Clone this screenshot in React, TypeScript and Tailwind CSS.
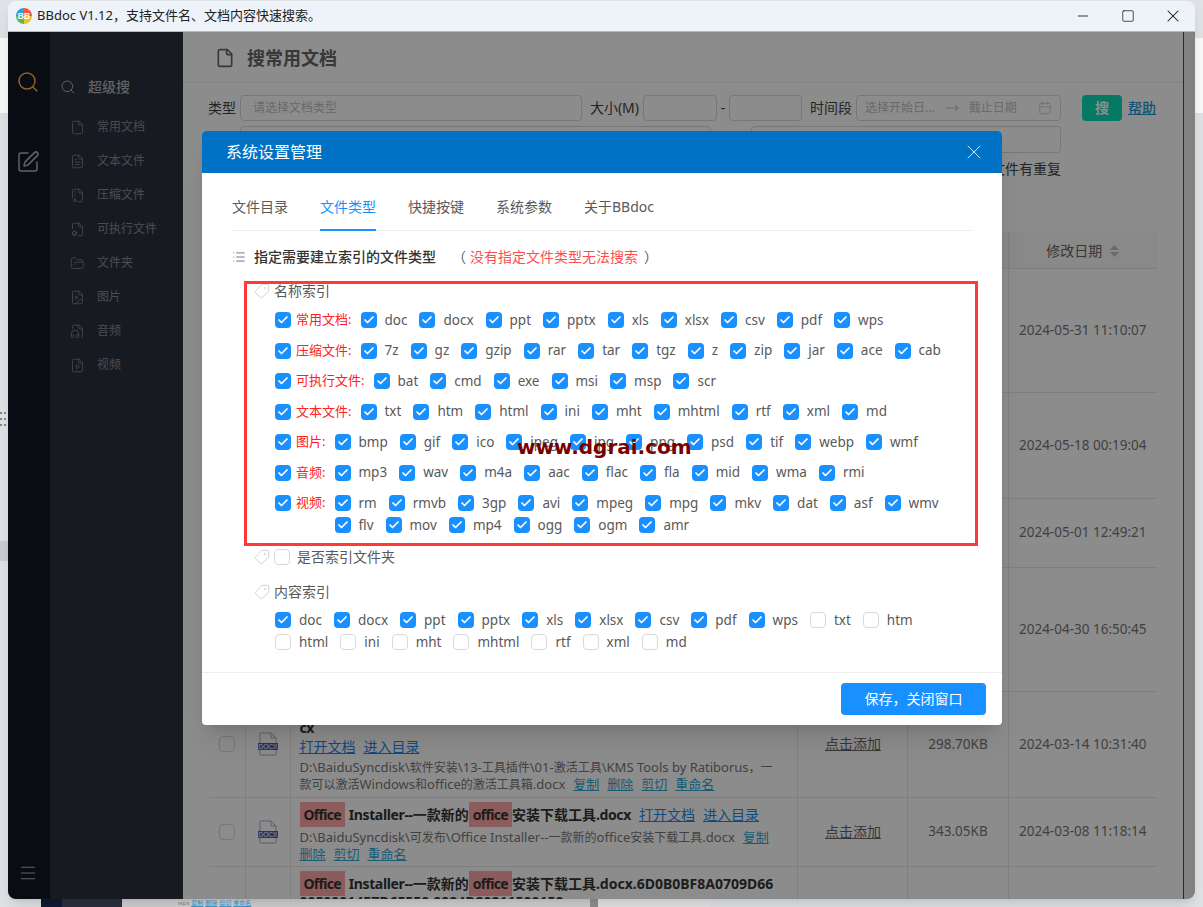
import { Calendar, Check, File, FileArchive, FileAudio, FileCog, FileImage, FileText, FileVideo, FolderOpen, List, Menu, Minus, MoveRight, Search, Square, SquarePen, Tag, X } from "lucide-react";

const sideItems = [
  { icon: File, label: "常用文档" },
  { icon: FileText, label: "文本文件" },
  { icon: FileArchive, label: "压缩文件" },
  { icon: FileCog, label: "可执行文件" },
  { icon: FolderOpen, label: "文件夹" },
  { icon: FileImage, label: "图片" },
  { icon: FileAudio, label: "音频" },
  { icon: FileVideo, label: "视频" },
];

const nameRows = [
  { label: "常用文档", items: ["doc", "docx", "ppt", "pptx", "xls", "xlsx", "csv", "pdf", "wps"] },
  { label: "压缩文件", items: ["7z", "gz", "gzip", "rar", "tar", "tgz", "z", "zip", "jar", "ace", "cab"] },
  { label: "可执行文件", items: ["bat", "cmd", "exe", "msi", "msp", "scr"] },
  { label: "文本文件", items: ["txt", "htm", "html", "ini", "mht", "mhtml", "rtf", "xml", "md"] },
  { label: "图片", items: ["bmp", "gif", "ico", "jpeg", "jpg", "png", "psd", "tif", "webp", "wmf"] },
  { label: "音频", items: ["mp3", "wav", "m4a", "aac", "flac", "fla", "mid", "wma", "rmi"] },
  { label: "视频", items: ["rm", "rmvb", "3gp", "avi", "mpeg", "mpg", "mkv", "dat", "asf", "wmv", "flv", "mov", "mp4", "ogg", "ogm", "amr"] },
];

const contentChecked = ["doc", "docx", "ppt", "pptx", "xls", "xlsx", "csv", "pdf", "wps"];
const contentOff = ["txt", "htm", "html", "ini", "mht", "mhtml", "rtf", "xml", "md"];

function Box({ on = true }: { on?: boolean }) {
  if (!on) return <span className="size-4 shrink-0 rounded-sm border border-[#d9d9d9] bg-white" />;
  return (
    <span className="flex size-4 shrink-0 items-center justify-center rounded-sm bg-[#1890ff]">
      <Check size={12} strokeWidth={3.5} className="text-white" />
    </span>
  );
}

function Item({ text, on = true }: { text: string; on?: boolean }) {
  return (
    <span className="flex h-[22px] items-center gap-2 text-[13.5px] text-[#595959]">
      <Box on={on} />
      {text}
    </span>
  );
}

function SectionHead({ text }: { text: string }) {
  return (
    <div className="flex h-5 items-center gap-1 pl-5.5 text-sm text-[#595959]">
      <Tag size={16} strokeWidth={1} className="-scale-x-100 text-[#bbbbbb]" />
      {text}
    </div>
  );
}

function DocIcon() {
  return (
    <svg width="20" height="24" viewBox="0 0 20 24" className="mx-auto">
      <path d="M3 1h10l5 5v16a1 1 0 0 1-1 1H3a1 1 0 0 1-1-1V2a1 1 0 0 1 1-1z" fill="#fff" stroke="#a3a9cc" />
      <path d="M13 1v5h5" fill="none" stroke="#a3a9cc" />
      <rect x="0" y="11" width="20" height="7" fill="#5560b0" />
      <text x="10" y="17" textAnchor="middle" fontSize="6.5" fill="#fff" fontFamily="Liberation Sans">DOCX</text>
    </svg>
  );
}

function L({ children }: { children: string }) {
  return <span className="tracking-tight">{children}</span>;
}

// chinese runs in the path lines are a size smaller than the latin ones
function C({ children }: { children: string }) {
  return <span className="text-xs">{children}</span>;
}

function Hl({ children }: { children: string }) {
  return <span className="inline-block h-[25px] bg-[#ffa8a8] px-1 tracking-tighter">{children}</span>;
}

function Links({ items, big = false }: { items: string[]; big?: boolean }) {
  return (
    <>
      {items.map((t) => (
        <a key={t} className={big ? "ml-2 text-sm font-normal text-[#1e88e5] underline first:ml-0" : "ml-2 text-[13px] text-[#2fa8d5] underline first:ml-0"}>
          {t}
        </a>
      ))}
    </>
  );
}

function Row({ h, date, size, doc, children }: { h: string; date: string; size?: string; doc?: boolean; children?: React.ReactNode }) {
  return (
    <tr className={`${h} border-b border-[#e8e8e8]`}>
      <td className="border-r border-[#e8e8e8] text-center align-middle">
        {doc && <span className="mx-auto block size-4 rounded-sm border border-[#d9d9d9] bg-white" />}
      </td>
      <td className="border-r border-[#e8e8e8] align-middle">{doc && <DocIcon />}</td>
      <td className="overflow-hidden border-r border-[#e8e8e8] pl-2.25 pr-3 align-top">{children}</td>
      <td className="border-r border-[#e8e8e8] text-center align-middle text-sm text-[#666] underline">{doc && "点击添加"}</td>
      <td className="border-r border-[#e8e8e8] text-center align-middle text-[13.5px] text-[#777]">{size}</td>
      <td className="text-center align-middle text-[13.5px] text-[#777]">{date}</td>
    </tr>
  );
}

function Input({ className, text }: { className: string; text?: string }) {
  return (
    <div className={`flex h-[26px] items-center rounded-sm border border-[#d9d9d9] bg-white px-3 text-xs text-[#bfbfbf] ${className}`}>{text}</div>
  );
}

function Main() {
  return (
    <div className="flex min-w-0 flex-1 flex-col bg-white">
      <div className="flex h-[51px] shrink-0 items-center gap-3 border-b border-[#eeeeee] pl-8 pt-0.5 text-lg font-bold text-[#666]">
        <File size={20} strokeWidth={2} />
        搜常用文档
      </div>
      <div className="flex pl-6.25 pt-3">
        <div className="w-[853px] text-sm text-[#444]">
          <div className="flex items-center">
            <span className="w-8">类型</span>
            <Input className="flex-1" text="请选择文档类型" />
            <span className="ml-2 mr-1">大小(M)</span>
            <Input className="w-[74px]" />
            <span className="w-3 text-center">-</span>
            <Input className="w-[73px]" />
            <span className="ml-2 mr-1">时间段</span>
            <div className="flex h-[26px] w-[205px] items-center rounded-sm border border-[#d9d9d9] bg-white px-2 text-xs text-[#bfbfbf]">
              选择开始日...
              <MoveRight size={14} className="mx-2.5" />
              截止日期
              <Calendar size={14} strokeWidth={1.25} className="ml-auto" />
            </div>
          </div>
          <div className="mt-1.25 flex">
            <Input className="ml-8 w-[471px]" />
            <Input className="ml-10 h-[27px] flex-1" />
          </div>
          <div className="mt-1.5 text-right">未显示文件有重复</div>
        </div>
        <div className="ml-[21px] flex h-[26px] items-center gap-1.5">
          <span className="flex h-[26px] w-10 items-center justify-center rounded-sm bg-[#0bdcb8] text-sm font-bold text-white">搜</span>
          <a className="text-sm font-medium text-[#1a9ad6] underline">帮助</a>
        </div>
      </div>
      <div className="mt-[53px] pl-6.5 pr-6.5">
        <table className="w-full table-fixed border-collapse">
          <colgroup>
            <col className="w-9" />
            <col className="w-[45px]" />
            <col />
            <col className="w-[110px]" />
            <col className="w-[100px]" />
            <col className="w-[149px]" />
          </colgroup>
          <thead>
            <tr className="h-9 border-b border-[#e8e8e8] bg-[#fafafa]">
              <th colSpan={5} className="border-r border-[#e8e8e8]" />
              <th className="font-normal text-[#666]">
                <span className="flex items-center justify-center gap-2 pt-0.5 text-sm">
                  修改日期
                  <svg width="9" height="12" viewBox="0 0 9 12" fill="#bfbfbf">
                    <path d="M4.5 0L9 5H0z" />
                    <path d="M4.5 12L0 7h9z" />
                  </svg>
                </span>
              </th>
            </tr>
          </thead>
          <tbody>
            <Row h="h-[124px]" date="2024-05-31 11:10:07" />
            <Row h="h-[106px]" date="2024-05-18 00:19:04" />
            <Row h="h-[69px]" date="2024-05-01 12:49:21" />
            <Row h="h-[124px]" date="2024-04-30 16:50:45" />
            <Row h="h-[106px]" date="2024-03-14 10:31:40" size="298.70KB" doc>
              <div className="pt-1.5 text-sm font-bold leading-5 text-[#333]">
                <L>KMS Tools by Ratiborus</L>，一款可以激活的工具箱.do
                <br />
                <L>cx</L>
              </div>
              <div className="-mt-0.5 leading-5">
                <Links big items={["打开文档", "进入目录"]} />
              </div>
              <div className="mt-0.5 whitespace-nowrap text-[13px] leading-4 text-[#777]">
                D:\BaiduSyncdisk\<C>软件安装</C>\13-<C>工具插件</C>\01-<C>激活工具</C>\KMS Tools by Ratiborus<C>，一</C>
                <br />
                <C>款可以激活</C>Windows<C>和</C>office<C>的激活工具箱</C>.docx
                <span className="ml-2"><Links items={["复制", "删除", "剪切", "重命名"]} /></span>
              </div>
            </Row>
            <Row h="h-[69px]" date="2024-03-08 11:18:14" size="343.05KB" doc>
              <div className="mt-1 whitespace-nowrap text-sm font-bold leading-[25px] text-[#333]">
                <Hl>Office</Hl> <L>Installer--</L>一款新的<Hl>office</Hl>安装下载工具<L>.docx</L>
                <span className="ml-2"><Links big items={["打开文档", "进入目录"]} /></span>
              </div>
              <div className="mt-0.5 whitespace-nowrap text-[13px] leading-4 text-[#777]">
                D:\BaiduSyncdisk\<C>可发布</C>\Office Installer--<C>一款新的</C>office<C>安装下载工具</C>.docx
                <span className="ml-2"><Links items={["复制"]} /></span>
                <br />
                <span><Links items={["删除", "剪切", "重命名"]} /></span>
              </div>
            </Row>
            <Row h="h-[69px]" date="" doc={false}>
              <div className="mt-1 whitespace-nowrap text-sm font-bold leading-[25px] text-[#333]">
                <Hl>Office</Hl> <L>Installer--</L>一款新的<Hl>office</Hl>安装下载工具.docx.6D0B0BF8A0709D66
                <div className="-mt-1 leading-5">00F0001457D6F550.0024D20211500159</div>
              </div>
            </Row>
          </tbody>
        </table>
      </div>
    </div>
  );
}

function Modal() {
  return (
    <div className="absolute left-[194px] top-[99px] flex h-[594px] w-[800px] flex-col overflow-hidden rounded-sm bg-white shadow-xl">
      <div className="flex h-[42px] shrink-0 items-center justify-between bg-[#0072c6] pl-6 pr-4 text-base text-white">
        系统设置管理
        <X size={24} strokeWidth={1} className="text-[#cfe4f7]" />
      </div>
      <div className="flex-1 px-7.5">
        <div className="flex gap-8 border-b border-[#eeeeee] pt-6 text-sm text-[#595959]">
          <span className="pb-3">文件目录</span>
          <span className="-mb-px border-b-2 border-[#1890ff] pb-3 text-[#1890ff]">文件类型</span>
          <span className="pb-3">快捷按键</span>
          <span className="pb-3">系统参数</span>
          <span className="pb-3">关于BBdoc</span>
        </div>
        <div className="mt-4 flex h-5 items-center text-sm">
          <List size={14} strokeWidth={1.5} className="mr-2 text-[#666]" />
          <span className="font-medium text-[#333]">指定需要建立索引的文件类型</span>
          <span className="ml-4 text-[#595959]">（</span>
          <span className="ml-1 text-[#ff4d4f]">没有指定文件类型无法搜索</span>
          <span className="ml-1.5 text-[#595959]">）</span>
        </div>
        <div className="mt-3.5">
          <SectionHead text="名称索引" />
        </div>
        <div className="mt-2 flex flex-col gap-[8.5px] pl-[43px]">
          {nameRows.map((r) => (
            <div key={r.label} className="flex items-start">
              <span className="flex h-[22px] items-center">
                <Box />
                <span className="ml-[5px] mr-2.25 whitespace-nowrap text-[13px] text-[#ff2020]">{r.label}:</span>
              </span>
              <div className="flex flex-1 flex-wrap gap-x-3">
                {r.items.map((t) => (
                  <Item key={t} text={t} />
                ))}
              </div>
            </div>
          ))}
        </div>
        <div className="mt-2.5 flex h-[22px] items-center pl-5.5 text-sm text-[#595959]">
          <Tag size={16} strokeWidth={1} className="mr-1 -scale-x-100 text-[#bbbbbb]" />
          <Box on={false} />
          <span className="ml-1.75">是否索引文件夹</span>
        </div>
        <div className="mt-3.5">
          <SectionHead text="内容索引" />
        </div>
        <div className="mt-[7px] flex flex-wrap gap-x-3 pl-[43px] pr-4">
          {contentChecked.map((t) => (
            <Item key={t} text={t} />
          ))}
          {contentOff.map((t) => (
            <Item key={t} text={t} on={false} />
          ))}
        </div>
      </div>
      <div className="flex h-[53px] shrink-0 justify-end border-t border-[#eeeeee] pr-4 pt-2.5">
        <button className="h-8 w-[145px] rounded-sm bg-[#1890ff] text-sm text-white">保存，关闭窗口</button>
      </div>
      <div className="absolute left-[42px] top-[150px] h-[265px] w-[734px] border-[3px] border-[#ff3838]" />
      <div className="absolute left-[315px] top-[302px] font-['DejaVu_Sans'] text-xl font-bold text-[#7a0000]">www.dgrai.com</div>
    </div>
  );
}

export default function App() {
  return (
    <div className="relative h-[907px] w-[1203px] overflow-hidden bg-[#dfe2e5] font-['Noto_Sans','Noto_Sans_CJK_SC',sans-serif]">
      {/* whatever is behind the window */}
      <div className="absolute left-0 top-[38px] h-[75px] w-full bg-[#f8f8f8]" />
      <div className="absolute left-0 top-[541px] h-5 w-2 bg-[#c9cdd2]" />
      <div className="absolute bottom-0 left-[41px] flex h-2 w-[669px]">
        <div className="w-[21px] bg-[#0f1a33]" />
        <div className="w-[60px] bg-[#2a3040]" />
        <div className="flex flex-1 items-center gap-0.5 overflow-hidden bg-[#cfcfcf] pl-14 text-[6px] leading-none text-[#888]">
          wps
          <span className="text-[#3a9ad0] underline">复制</span>
          <span className="text-[#3a9ad0] underline">删除</span>
          <span className="text-[#3a9ad0] underline">剪切</span>
          <span className="text-[#3a9ad0] underline">重命名</span>
        </div>
        <div className="w-2 bg-[#8f8f8f]" />
        <div className="w-28 bg-[#e4e4e4]" />
      </div>
      <div className="absolute left-0 top-[412px] grid grid-cols-2 gap-x-0.5 gap-y-1">
        {[0, 1, 2, 3, 4, 5].map((i) => (
          <span key={i} className="size-0.5 rounded-full bg-[#666]" />
        ))}
      </div>

      <div className="absolute left-2 top-px flex h-[898px] w-[1187px] flex-col overflow-hidden rounded-lg shadow-lg">
        <div className="flex h-[31px] shrink-0 items-center border-b border-[#b5b8bc] bg-[#eef3fa] text-[13px] text-[#222]">
          <svg width="16" height="16" viewBox="0 0 16 16" className="ml-2 mr-[5px]">
            <path d="M8 8V0a8 8 0 0 1 8 8z" fill="#ef5a3a" />
            <path d="M8 8h8a8 8 0 0 1-8 8z" fill="#f3c326" />
            <path d="M8 8v8a8 8 0 0 1-8-8z" fill="#5cb85c" />
            <path d="M8 8H0a8 8 0 0 1 8-8z" fill="#2f9fd8" />
            <text x="8" y="11" textAnchor="middle" fontSize="8.5" fontWeight="700" fill="#fff" fontFamily="Liberation Sans">BB</text>
          </svg>
          BBdoc V1.12，支持文件名、文档内容快速搜索。
          <div className="ml-auto flex items-center text-[#111]">
            <span className="flex w-[45px] justify-center"><Minus size={16} strokeWidth={1.25} /></span>
            <span className="flex w-[45px] justify-center"><Square size={14} strokeWidth={1.25} /></span>
            <span className="flex w-[45px] justify-center"><X size={20} strokeWidth={1.25} /></span>
          </div>
        </div>
        <div className="relative flex min-h-0 flex-1">
          <div className="flex w-[42px] shrink-0 flex-col items-center bg-[#121824] pr-0.5">
            <Search size={24} strokeWidth={1.5} className="mt-9.5 text-[#ffb340]" />
            <SquarePen size={24} strokeWidth={1.5} className="mt-14 text-[#aeb2ba]" />
            <Menu size={20} strokeWidth={1.25} className="mb-4 mt-auto text-[#aeb2ba]" />
          </div>
          <div className="w-[133px] shrink-0 bg-[#2c313d] text-[#868a92]">
            <div className="flex h-[78px] items-center gap-3 pl-2.5 pt-[31px] text-sm font-medium text-[#b0b3b8]">
              <Search size={16} strokeWidth={1.5} />
              超级搜
            </div>
            {sideItems.map((s) => (
              <div key={s.label} className="flex h-[34px] items-center gap-3 pl-5 text-xs">
                <s.icon size={15} strokeWidth={1.25} />
                {s.label}
              </div>
            ))}
          </div>
          <Main />
          <div className="w-3 shrink-0 border-l border-[#4a4a4a] bg-[#ececec]" />
          <div className="absolute inset-0 bg-black/45" />
          <Modal />
        </div>
      </div>
    </div>
  );
}
